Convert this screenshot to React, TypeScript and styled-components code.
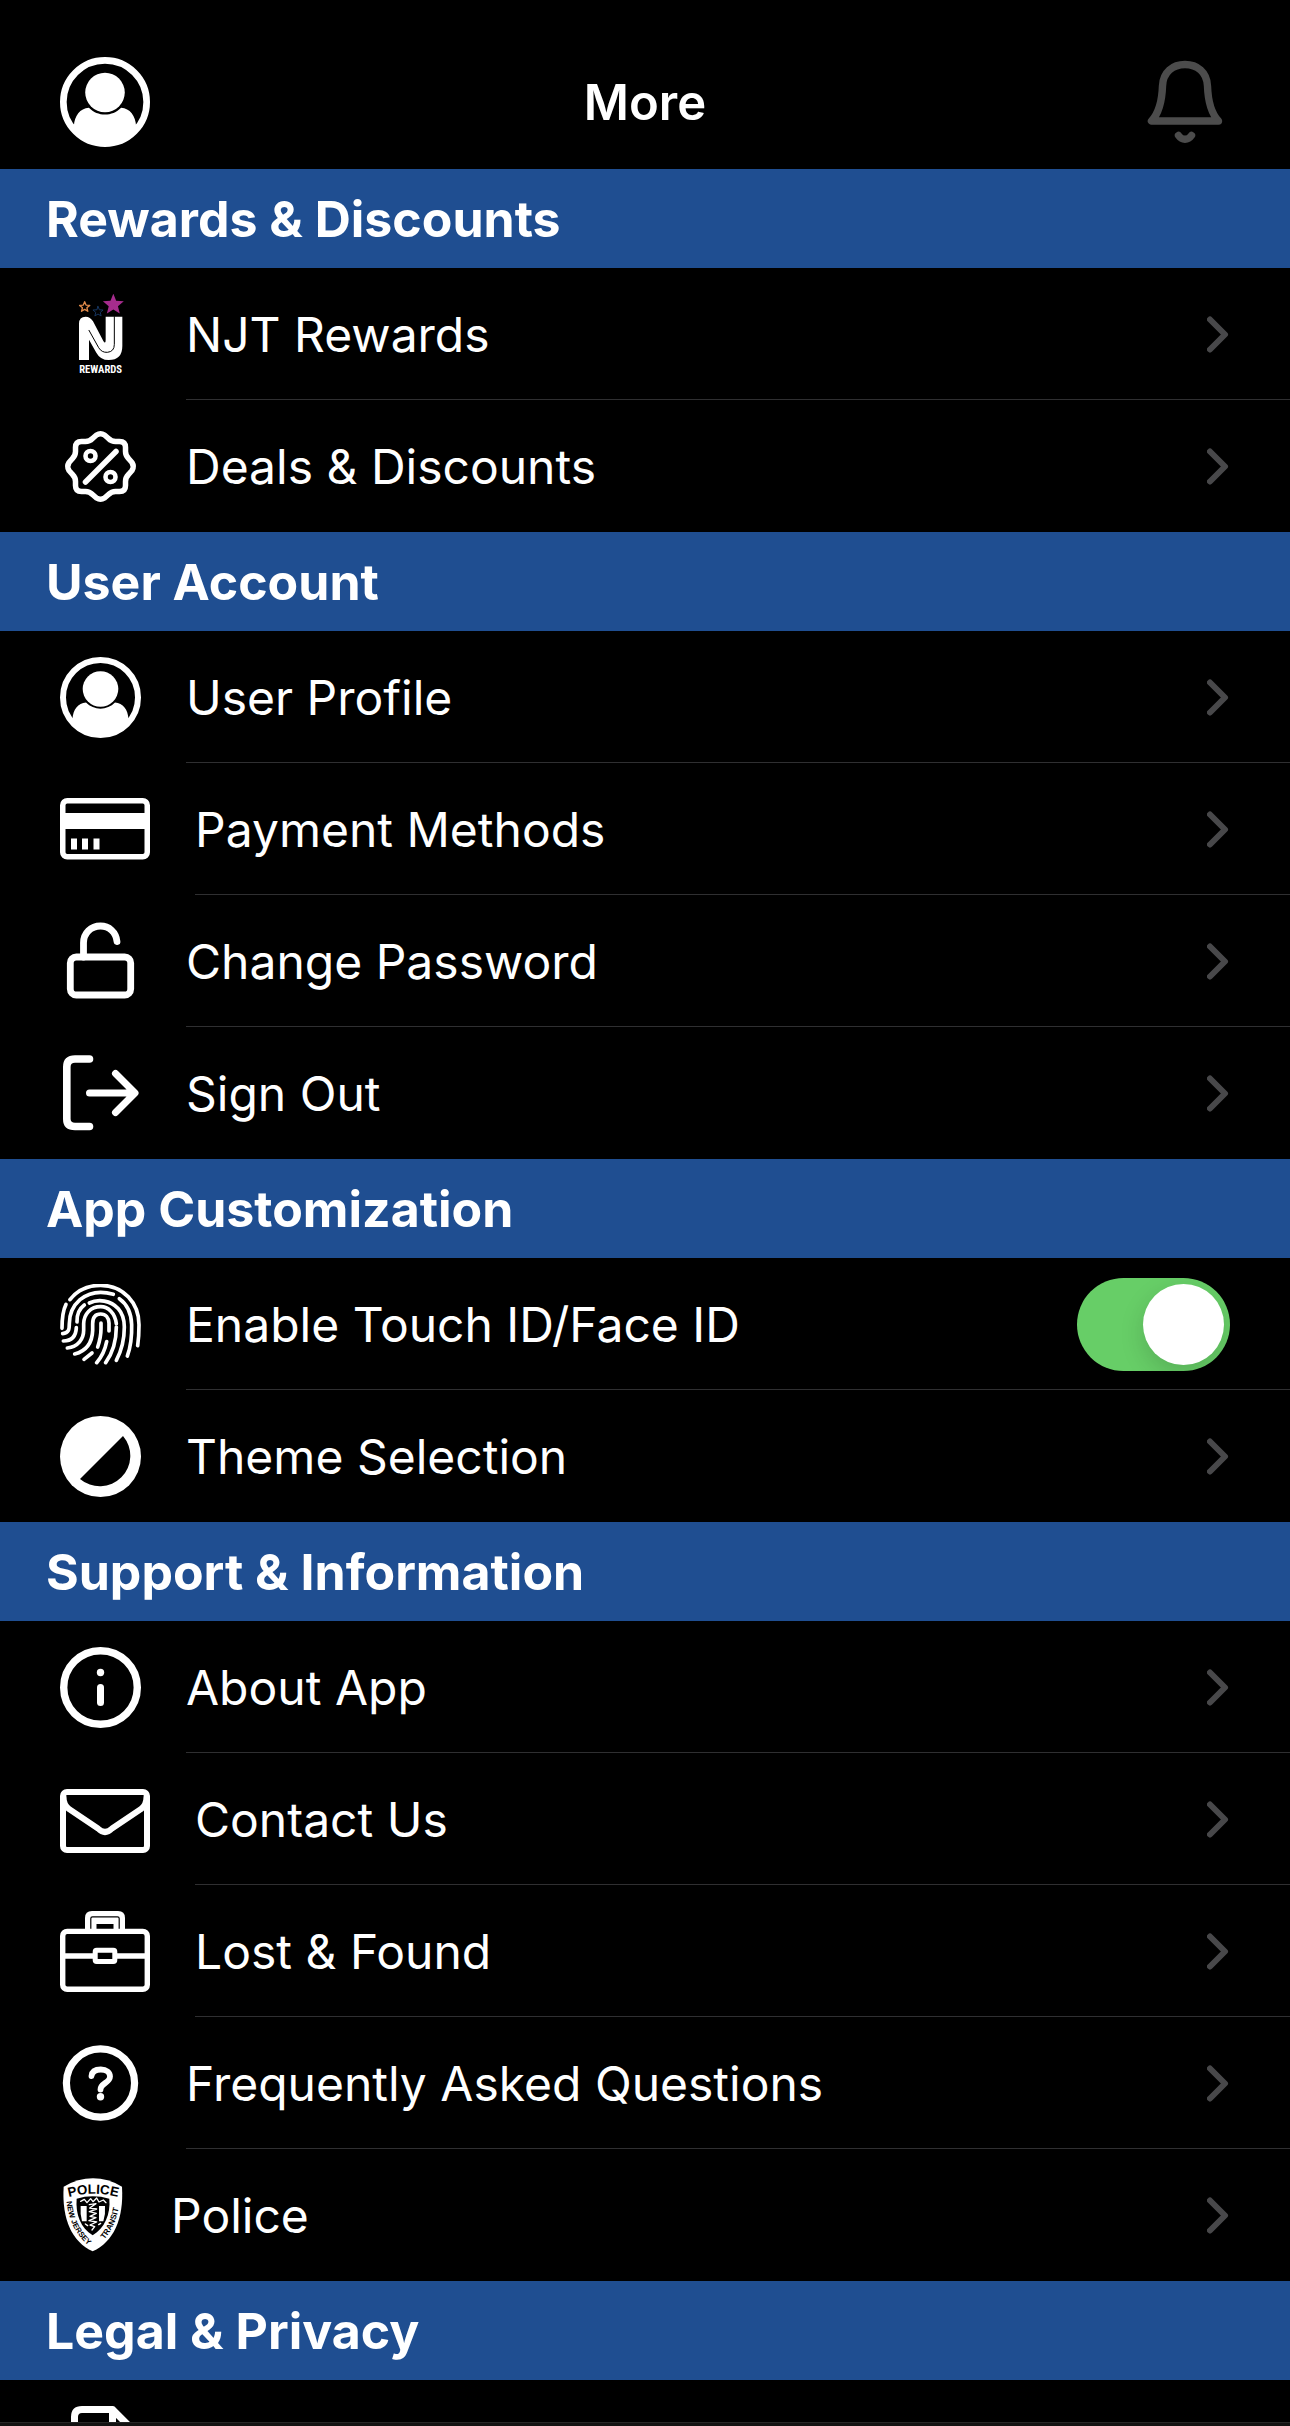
import React, { useState } from "react";
import styled, { createGlobalStyle, css } from "styled-components";

const sans = `Inter, "Liberation Sans", Arial, sans-serif`;

const GlobalStyle = createGlobalStyle`
  *, *::before, *::after { box-sizing: border-box; }
  html, body { margin: 0; background: #000; }
  body { font-family: ${sans}; color: #fff; }
`;

const Screen = styled.div`
  display: flex;
  flex-direction: column;
  height: 100vh;
  overflow: hidden;
  background: #000;
`;

const TopBar = styled.header`
  flex: none;
  display: grid;
  grid-template-columns: 90px 1fr 90px;
  align-items: center;
  padding: 57px 60px 22px;
`;

const Title = styled.h1`
  margin: 0;
  padding-top: 2px;
  font-size: 49px;
  line-height: 60px;
  font-weight: 600;
  text-align: center;
`;

const IconButton = styled.button`
  display: flex;
  padding: 0;
  border: 0;
  background: none;
  color: #fff;
  cursor: pointer;
`;

const Content = styled.main`
  flex: 1;
  min-height: 0;
  overflow-y: auto;
  scrollbar-width: none;
`;

const SectionTitle = styled.h2`
  display: flex;
  align-items: center;
  height: 99px;
  margin: 0;
  padding: 0 46px;
  background: #1f4e91;
  font-size: 50px;
  line-height: 60px;
  font-weight: 700;
`;

const List = styled.ul`
  margin: 0;
  padding: 0;
  list-style: none;
`;

const rowLayout = css`
  display: flex;
  align-items: center;
  gap: 45px;
  height: 132px;
  padding-left: 60px;
  color: #fff;
  text-decoration: none;
`;

const LinkRow = styled.a`
  ${rowLayout}
`;

const SwitchRow = styled.label`
  ${rowLayout}
  cursor: pointer;
`;

const RowBody = styled.span<{ $divider: boolean }>`
  flex: 1;
  align-self: stretch;
  display: flex;
  align-items: center;
  justify-content: space-between;
  padding: 2px 60px 0 0;
  border-bottom: 1px solid ${(p) => (p.$divider ? "#2f2f31" : "transparent")};
`;

const RowLabel = styled.span`
  font-size: 48px;
  line-height: 60px;
  font-weight: 400;
`;

const Toggle = styled.input`
  appearance: none;
  display: flex;
  align-items: center;
  width: 153px;
  height: 93px;
  margin: 0;
  padding: 6px;
  border-radius: 47px;
  background: #39393d;
  cursor: pointer;

  &::before {
    content: "";
    width: 81px;
    height: 81px;
    border-radius: 50%;
    background: #fff;
    box-shadow: 0 9px 24px rgba(0, 0, 0, 0.15);
  }

  &:checked {
    justify-content: flex-end;
    background: #67ce67;
  }
`;

const TabBar = styled.footer`
  flex: none;
  height: 4px;
  border-top: 1px solid #262626;
  background: #121212;
`;

const Glyph = styled.svg`
  flex: none;
  display: block;
  fill: none;
  stroke: currentColor;
  stroke-linecap: round;
  stroke-linejoin: round;
`;

type GlyphProps = { size?: number };

const UserIcon = ({ size = 81 }: GlyphProps) => (
  <Glyph width={size} height={size} viewBox="0 0 81 81" strokeWidth="6">
    <circle cx="40.5" cy="40.5" r="37.5" />
    <g fill="currentColor" stroke="none">
      <circle cx="40.5" cy="32" r="17.8" />
      <path d="M12.5 62C13 53 18 46 26 45.6C34 53.8 47 53.8 55 45.6C63 46 68 53 68.5 62C62 72 52 78 40.5 78S19 72 12.5 62Z" />
    </g>
  </Glyph>
);

const BellIcon = () => (
  <Glyph width="90" height="90" viewBox="0 0 90 90" strokeWidth="7.4" color="#4c4c4c">
    <path d="M11.5 64H78.5C71 56 68 44 67.5 29C67 15 57 7.5 45 7.5S23 15 22.5 29C22 44 19 56 11.5 64Z" />
    <path d="M38.5 78.5C42 83.5 48 83.5 51.5 78.5" />
  </Glyph>
);

const star = (cx: number, cy: number, r: number) =>
  Array.from({ length: 10 }, (_, i) => {
    const radius = i % 2 ? r * 0.44 : r;
    const angle = (Math.PI / 5) * i - Math.PI / 2;
    return `${(cx + radius * Math.cos(angle)).toFixed(1)},${(cy + radius * Math.sin(angle)).toFixed(1)}`;
  }).join(" ");

const LogoWord = styled.text`
  font-family: "Roboto Condensed", "Liberation Sans Narrow", "Liberation Sans", sans-serif;
  font-size: 32px;
  font-weight: 700;
  text-anchor: middle;
  fill: #fff;
  stroke: none;
`;

const RewardsIcon = () => (
  <Glyph width="81" height="81" viewBox="0 39 243 243">
    <polygon points={star(160, 71, 33)} fill="#a52c8d" stroke="none" />
    <polygon points={star(74, 78, 16)} stroke="#e08a4a" strokeWidth="4" />
    <polygon points={star(114, 92, 16)} stroke="#16355f" strokeWidth="3" />
    <path
      fill="#fff"
      stroke="none"
      d="M57 237V128Q57 107 77 107Q91 107 99 121L130 180Q137 191 137 176V107H187V195Q187 237 146 237Q121 237 109 215L87 176V237Z"
    />
    <path stroke="#000" strokeWidth="3" d="M87 148L116 200Q125 215 142 214Q163 212 163 190V107" />
    <LogoWord x="122" y="276">REWARDS</LogoWord>
  </Glyph>
);

const DealsIcon = () => (
  <Glyph width="81" height="81" viewBox="-40.5 -40.5 81 81" strokeWidth="5.5">
    <path d="M-25 -19Q-25 -25 -19 -25H-15Q-11 -25 -8 -28L-4 -31.5Q0 -34 4 -31.5L8 -28Q11 -25 15 -25H19Q25 -25 25 -19V-15Q25 -11 28 -8L31.5 -4Q34 0 31.5 4L28 8Q25 11 25 15V19Q25 25 19 25H15Q11 25 8 28L4 31.5Q0 34 -4 31.5L-8 28Q-11 25 -15 25H-19Q-25 25 -25 19V15Q-25 11 -28 8L-31.5 4Q-34 0 -31.5 -4L-28 -8Q-25 -11 -25 -15Z" />
    <path d="M15.5 -15L-15 15.5" />
    <circle cx="-10" cy="-10.5" r="5" strokeWidth="4.6" />
    <circle cx="10" cy="10.5" r="5" strokeWidth="4.6" />
  </Glyph>
);

const CardIcon = () => (
  <Glyph width="90" height="62" viewBox="0 0 90 62">
    <rect x="2.75" y="2.75" width="84.5" height="56" rx="4.5" strokeWidth="5.5" />
    <path fill="currentColor" stroke="none" d="M3 15H87V31H3ZM11 40.5H17V51.5H11ZM22 40.5H28V51.5H22ZM33.5 40.5H39.5V51.5H33.5Z" />
  </Glyph>
);

const UnlockIcon = () => (
  <Glyph width="81" height="81" viewBox="0 0 81 81" strokeWidth="6.8">
    <rect x="10.3" y="36" width="60.4" height="38" rx="6" />
    <path d="M23.5 36V22C23.5 12 31 5 40.5 5C49 5 56 11 57 20.5" />
  </Glyph>
);

const SignOutIcon = () => (
  <Glyph width="81" height="81" viewBox="0 0 81 81" strokeWidth="7.6">
    <path d="M29.5 6H15Q6.8 6 6.8 14V66Q6.8 73.5 15 73.5H29.5" />
    <path d="M29.5 40H73M55.5 20.5L75 40L55.5 59.5" strokeWidth="7" />
  </Glyph>
);

const FingerprintIcon = () => (
  <Glyph width="81" height="81" viewBox="60 41 243 243" strokeWidth="11">
    <path d="M90 88C115 55 150 45 182 45C250 45 297 98 297 163C297 190 296 205 293 226" />
    <path d="M78 102C68 122 66 145 66 174" />
    <path d="M220 72C180 60 145 68 120 88C95 110 88 135 88 160C88 178 86 188 68 190" />
    <path d="M238 85C262 102 274 130 275 163C276 200 272 230 262 257" />
    <path d="M148 98C175 85 212 90 235 115C250 132 253 152 253 170C253 210 245 240 229 270" />
    <path d="M133 104C118 115 110 133 111 155M109 172C108 195 98 212 70 212" />
    <path d="M82 233C115 230 131 205 131 180V160C132 130 152 109 182 109C205 109 225 128 229 160" />
    <path d="M229 170C229 210 220 245 197 277" />
    <path d="M104 251C145 240 157 210 158 180V160C158 140 168 131 182 131C197 131 206 142 207 158V182" />
    <path d="M183 158V175C183 200 178 215 173 230" />
    <path d="M132 267L156 248" />
    <path d="M200 214C195 240 185 260 170 277" />
  </Glyph>
);

const ThemeIcon = () => (
  <Glyph width="81" height="81" viewBox="0 0 81 81">
    <circle cx="40.5" cy="40.5" r="40.5" fill="currentColor" stroke="none" />
    <path d="M63 20A30.5 30.5 0 0 1 20 63Z" fill="#000" stroke="none" />
  </Glyph>
);

const InfoIcon = () => (
  <Glyph width="81" height="81" viewBox="0 0 81 81" strokeWidth="7.4">
    <circle cx="40.5" cy="40.5" r="36.8" />
    <path d="M40.5 40.5V55.5" strokeWidth="7" />
    <circle cx="40.5" cy="25.5" r="3.7" fill="currentColor" stroke="none" />
  </Glyph>
);

const MailIcon = () => (
  <Glyph width="90" height="68" viewBox="0 -4 90 68" strokeWidth="6">
    <rect x="3" y="3" width="84" height="58" rx="4" />
    <path d="M3.5 8C3.5 14 5 17 9 20L38 39.5Q45 46.5 52 39.5L81 20C85 17 86.5 14 86.5 8" />
  </Glyph>
);

const BriefcaseIcon = () => (
  <Glyph width="90" height="81" viewBox="0 0 90 81" strokeWidth="5.4">
    <path fill="currentColor" stroke="none" d="M25 20V7Q25 0 32 0H58Q65 0 65 7V20Z" />
    <path stroke="#000" strokeWidth="1.2" strokeLinecap="butt" d="M30.8 18V7.5Q30.8 5.8 32.5 5.8H57.5Q59.2 5.8 59.2 7.5V18" />
    <rect x="36.5" y="13" width="17" height="6" fill="#000" stroke="none" />
    <rect x="2.7" y="20.4" width="84.6" height="57.9" rx="4.5" />
    <path d="M3 45H87" />
    <rect x="35.2" y="39.2" width="19.6" height="11.2" rx="1.5" fill="#000" strokeWidth="5" />
  </Glyph>
);

const QuestionIcon = () => (
  <Glyph width="81" height="81" viewBox="0 0 81 81" strokeWidth="7.2">
    <circle cx="40.5" cy="40" r="34.1" />
    <path strokeWidth="5.8" d="M31.5 33C32 28.5 35.5 26.5 40.8 26.5C46.5 26.5 50 29.5 50 33.5C50 40 40.5 40 40.5 46.5" />
    <circle cx="40.5" cy="53.8" r="3.7" fill="currentColor" stroke="none" />
  </Glyph>
);

const BadgeText = styled.text<{ $size: number }>`
  font-family: "Liberation Sans", Arial, sans-serif;
  font-size: ${(p) => p.$size}px;
  font-weight: 700;
  text-anchor: middle;
  fill: #000;
  stroke: none;
`;

const PoliceIcon = () => (
  <Glyph width="66" height="74" viewBox="30 52 198 222">
    <defs>
      <path id="badge-top" d="M46 112Q130 86 214 112" />
      <path id="badge-left" d="M49 116C54 176 76 222 119 258" />
      <path id="badge-right" d="M152 247C184 218 200 178 209 128" />
    </defs>
    <path
      fill="#fff"
      stroke="none"
      d="M41 78Q84 53 129 53T216 78C222 176 190 243 128 272C66 243 35 176 41 78Z"
    />
    <path fill="#000" stroke="none" d="M80 114Q128 100 178 114C182 160 164 202 128 224C92 202 76 160 80 114Z" />
    <path fill="#fff" stroke="none" d="M92 136H110V182H96Q90 160 92 136ZM147 136H165Q167 160 160 182H147Z" />
    <path
      strokeWidth="4"
      stroke="#fff"
      d="M92 122L103 116L111 126L122 114L129 123L140 112L147 124L160 118L168 126M118 132L138 129L119 142L140 145L118 153L139 158L120 167L138 171L117 180L140 184L120 193L134 198L126 208M106 190L113 195M146 192L152 188"
    />
    <BadgeText $size={40}>
      <textPath href="#badge-top" startOffset="50%">POLICE</textPath>
    </BadgeText>
    <BadgeText $size={23}>
      <textPath href="#badge-left" startOffset="50%">NEW JERSEY</textPath>
    </BadgeText>
    <BadgeText $size={24}>
      <textPath href="#badge-right" startOffset="50%">TRANSIT</textPath>
    </BadgeText>
  </Glyph>
);

const DocumentIcon = () => (
  <Glyph width="81" height="81" viewBox="0 0 81 81" strokeWidth="7">
    <path d="M52.5 3.5H22Q14.5 3.5 14.5 11V70Q14.5 77.5 22 77.5H63Q70.5 77.5 70.5 70V21.5ZM52.5 3.5V21.5H70.5" />
  </Glyph>
);

const Chevron = () => (
  <Glyph width="23" height="37" viewBox="0 0 23 37" strokeWidth="6" color="#48484a" aria-hidden="true">
    <path d="M3 3.5L18 18.5L3 33.5" />
  </Glyph>
);

type Item = {
  icon: React.ComponentType<GlyphProps>;
  label?: string;
  name?: string;
  toggle?: boolean;
};

const sections: { title: string; items: Item[] }[] = [
  {
    title: "Rewards & Discounts",
    items: [
      { icon: RewardsIcon, label: "NJT Rewards" },
      { icon: DealsIcon, label: "Deals & Discounts" },
    ],
  },
  {
    title: "User Account",
    items: [
      { icon: UserIcon, label: "User Profile" },
      { icon: CardIcon, label: "Payment Methods" },
      { icon: UnlockIcon, label: "Change Password" },
      { icon: SignOutIcon, label: "Sign Out" },
    ],
  },
  {
    title: "App Customization",
    items: [
      { icon: FingerprintIcon, label: "Enable Touch ID/Face ID", toggle: true },
      { icon: ThemeIcon, label: "Theme Selection" },
    ],
  },
  {
    title: "Support & Information",
    items: [
      { icon: InfoIcon, label: "About App" },
      { icon: MailIcon, label: "Contact Us" },
      { icon: BriefcaseIcon, label: "Lost & Found" },
      { icon: QuestionIcon, label: "Frequently Asked Questions" },
      { icon: PoliceIcon, label: "Police" },
    ],
  },
  {
    title: "Legal & Privacy",
    items: [{ icon: DocumentIcon, name: "Legal documents" }],
  },
];

function Row({ item, last }: { item: Item; last: boolean }) {
  const [on, setOn] = useState(true);
  const Icon = item.icon;
  if (item.toggle) {
    return (
      <SwitchRow htmlFor="biometrics">
        <Icon />
        <RowBody $divider={!last}>
          <RowLabel>{item.label}</RowLabel>
          <Toggle
            id="biometrics"
            type="checkbox"
            role="switch"
            checked={on}
            onChange={(e) => setOn(e.target.checked)}
          />
        </RowBody>
      </SwitchRow>
    );
  }
  return (
    <LinkRow href="#" aria-label={item.name}>
      <Icon />
      <RowBody $divider={!last}>
        {item.label && <RowLabel>{item.label}</RowLabel>}
        {item.label && <Chevron />}
      </RowBody>
    </LinkRow>
  );
}

export default function App() {
  return (
    <Screen>
      <GlobalStyle />
      <TopBar>
        <IconButton type="button" aria-label="Profile">
          <UserIcon size={90} />
        </IconButton>
        <Title>More</Title>
        <IconButton type="button" aria-label="Notifications">
          <BellIcon />
        </IconButton>
      </TopBar>
      <Content>
        {sections.map((section) => (
          <section key={section.title}>
            <SectionTitle>{section.title}</SectionTitle>
            <List>
              {section.items.map((item, i) => (
                <li key={i}>
                  <Row item={item} last={i === section.items.length - 1} />
                </li>
              ))}
            </List>
          </section>
        ))}
      </Content>
      <TabBar />
    </Screen>
  );
}
